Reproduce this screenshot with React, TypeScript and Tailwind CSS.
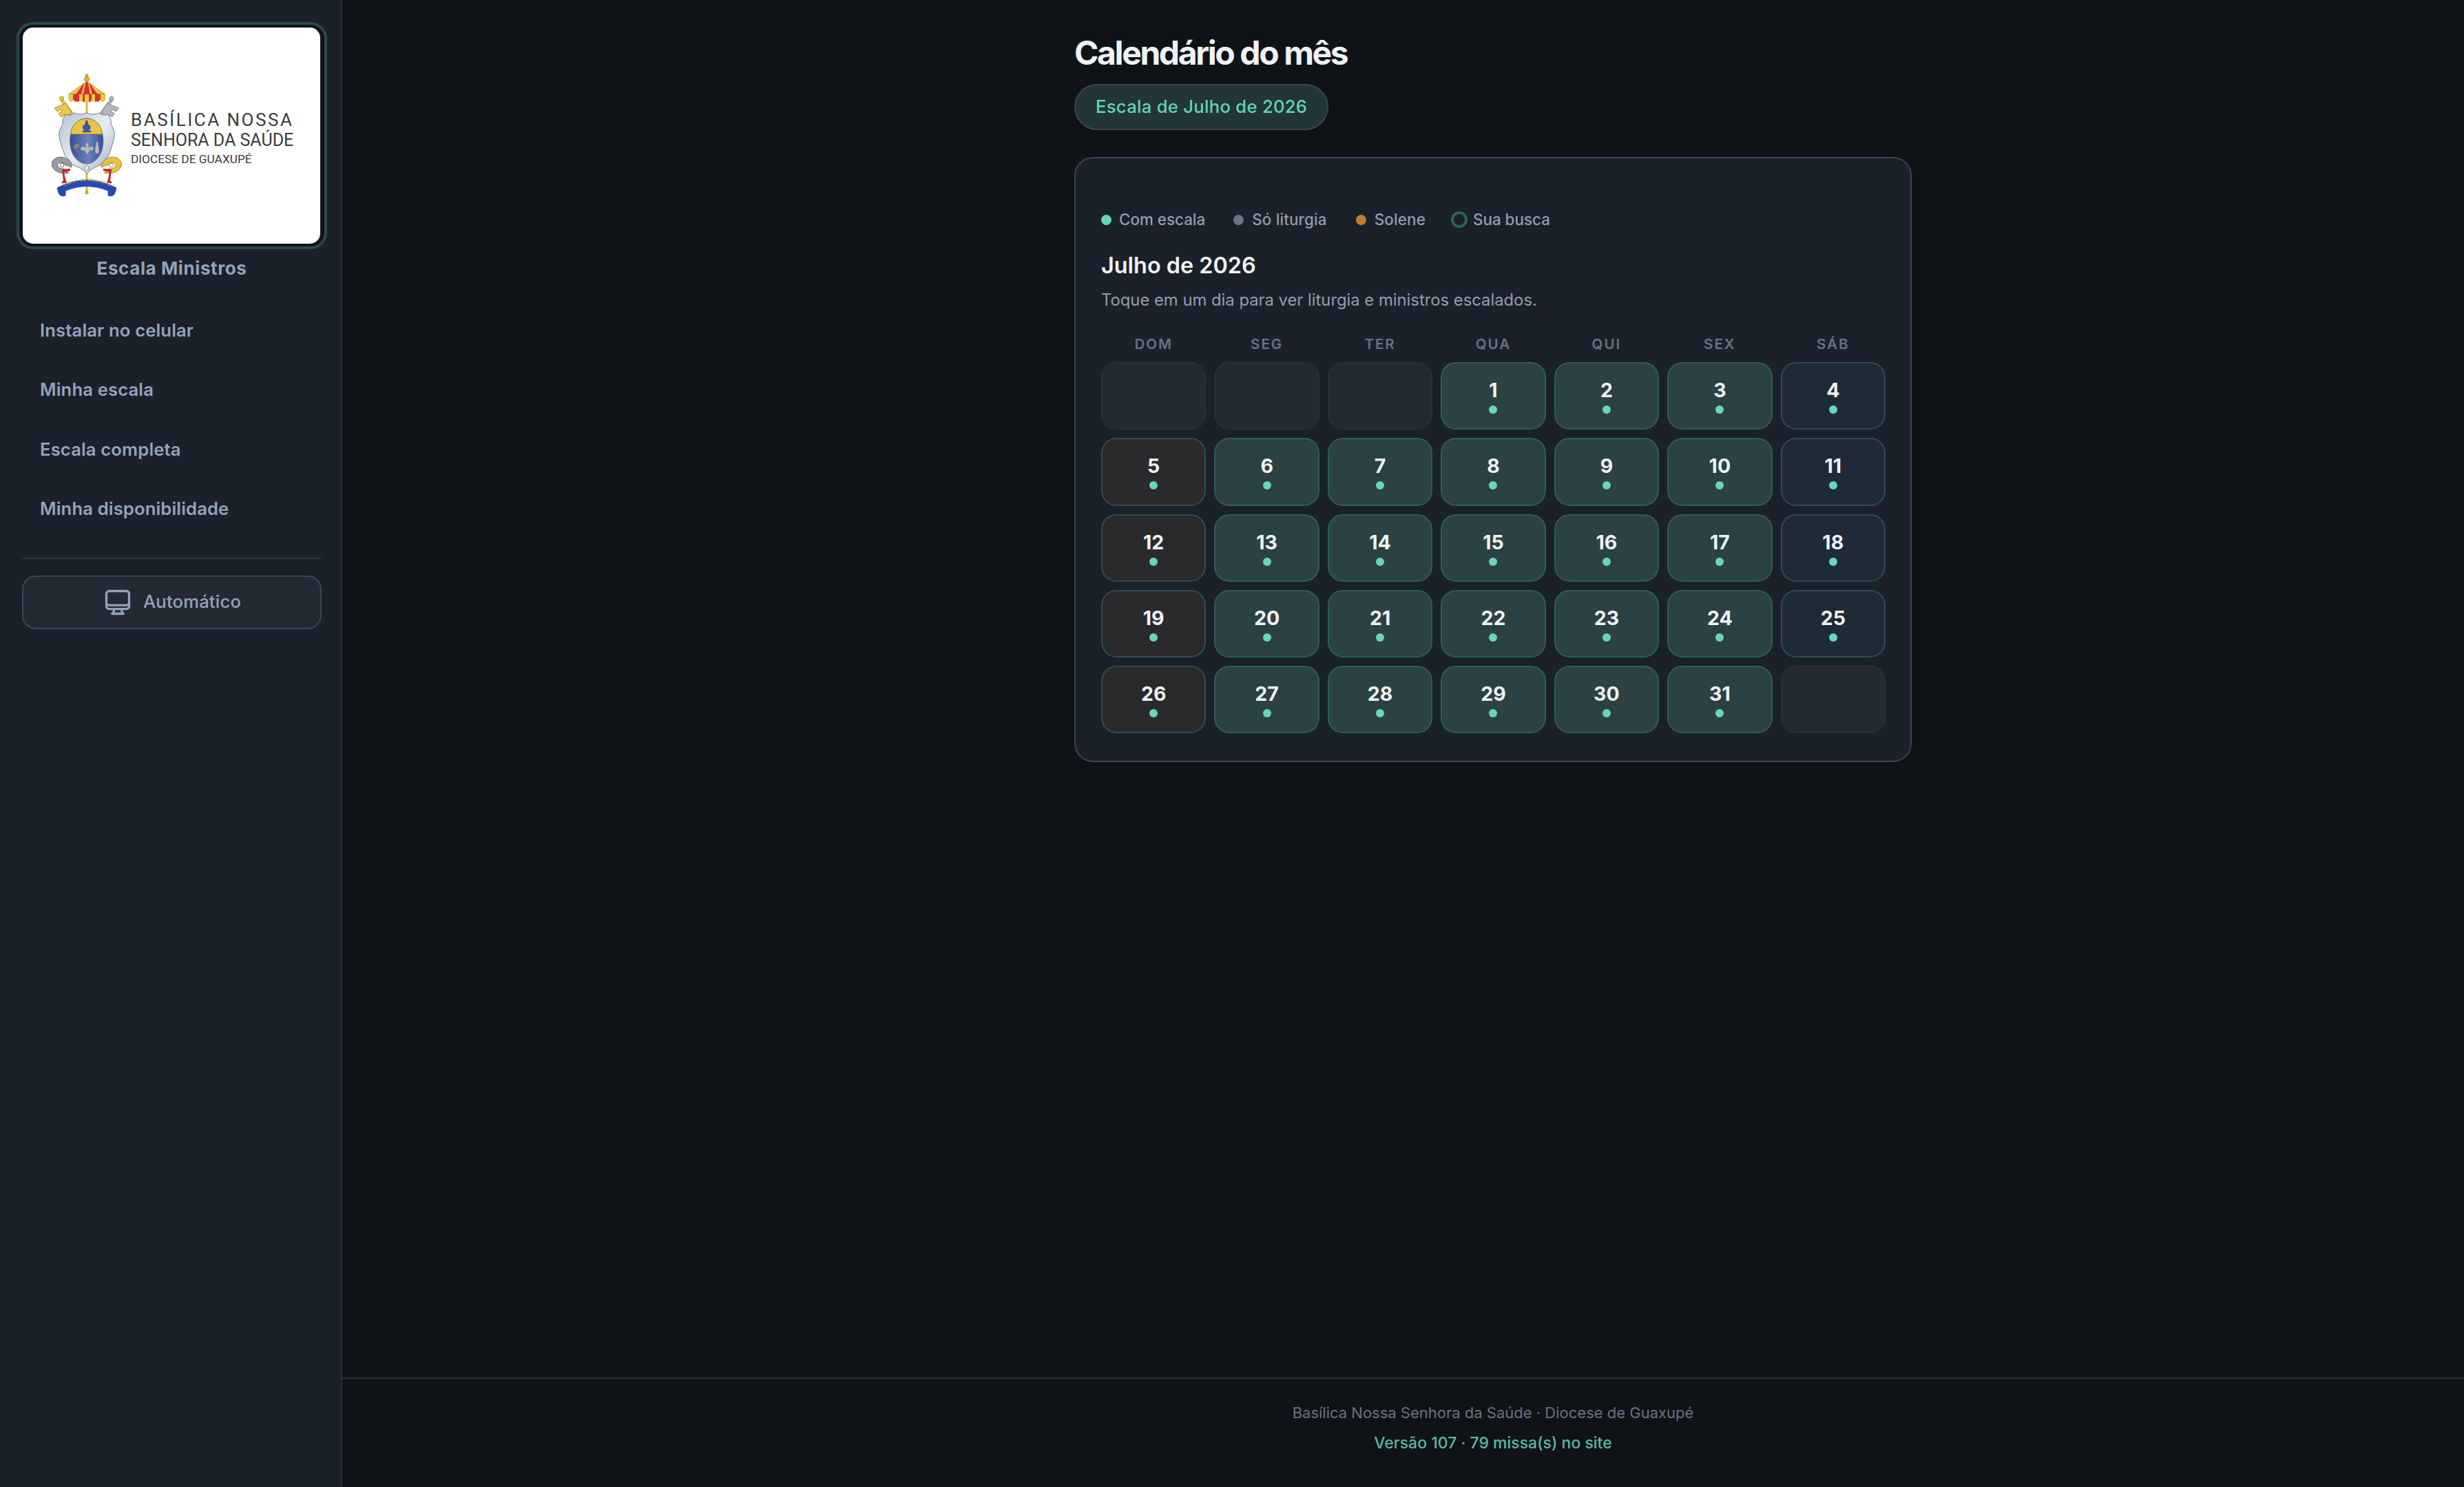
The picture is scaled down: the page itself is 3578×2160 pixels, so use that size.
const inter = { fontFamily: "Inter, 'Noto Sans', sans-serif" };

type Cell = { day?: number; kind: "empty" | "escala" | "domingo" | "sabado" };

const weekLabels = ["DOM", "SEG", "TER", "QUA", "QUI", "SEX", "SÁB"];

function buildCells(): Cell[] {
  const cells: Cell[] = [{ kind: "empty" }, { kind: "empty" }, { kind: "empty" }];
  for (let day = 1; day <= 31; day++) {
    const col = (day + 2) % 7;
    cells.push({ day, kind: col === 0 ? "domingo" : col === 6 ? "sabado" : "escala" });
  }
  cells.push({ kind: "empty" });
  return cells;
}

const cellStyles = {
  empty: "border-[#2a303b] bg-[#232a34]",
  escala: "border-[#2f5c5c] bg-[#2b4144]",
  domingo: "border-[#2f4f4d] bg-[#2a2a2c]",
  sabado: "border-[#2c4f50] bg-[#1e2a36]",
};

function KeyShape() {
  return (
    <>
      <path d="M49 78 L31 54 L28 56.5 L46 80 Z" />
      <circle cx="29.5" cy="53" r="3" />
      <path d="M36 60 L19 67 L23 72 L28 69 L30 72 L25 75 L29 80 L34 77 L36 81 L44 73 Z" />
    </>
  );
}

function Curl() {
  return (
    <>
      <path d="M40 161 C28 164 16 158 15 149 C15 141 25 136 33 139 C40 141 45 147 44 153 C40 151 38 150 35 150 C33 146 27 145 24 148 C22 152 27 156 33 155 Z" />
      <circle cx="30" cy="150" r="3" fill="#ffffff" />
    </>
  );
}

function Crest() {
  return (
    <svg viewBox="15 0 110 210" className="h-[210px] w-[110px] shrink-0">
      <defs>
        <linearGradient id="silver" x1="0" y1="0" x2="1" y2="1">
          <stop offset="0" stopColor="#b4c3d6" />
          <stop offset="0.5" stopColor="#e6ecf2" />
          <stop offset="1" stopColor="#a3b3c6" />
        </linearGradient>
        <linearGradient id="blue" x1="0" y1="0" x2="1" y2="0">
          <stop offset="0" stopColor="#34509e" />
          <stop offset="0.55" stopColor="#6d82bd" />
          <stop offset="1" stopColor="#34509e" />
        </linearGradient>
        <path id="ribbonPath" d="M33 181 Q66 165 100 181" />
      </defs>

      {/* pole */}
      <rect x="64.6" y="55" width="2.8" height="135" fill="#e0b22e" />
      <circle cx="66" cy="189.5" r="2.4" fill="#e0b22e" stroke="#8a6d1a" strokeWidth="0.5" />

      {/* keys */}
      <g stroke="#6d5a18" strokeWidth="0.6" fill="#eec93f">
        <KeyShape />
      </g>
      <g stroke="#55585c" strokeWidth="0.6" fill="#b4b7bb" transform="translate(131.5 0) scale(-1 1)">
        <KeyShape />
      </g>

      {/* canopy */}
      <circle cx="66" cy="20" r="2.2" fill="#e3b52f" stroke="#7a6114" strokeWidth="0.5" />
      <ellipse cx="66" cy="25" rx="4" ry="3" fill="#e3b52f" stroke="#7a6114" strokeWidth="0.5" />
      <path d="M66 28 L40 47 H92.5 Z" fill="#f0c93a" stroke="#7a6114" strokeWidth="0.6" />
      <path d="M62.5 30 L50 47 H58 Z M69.5 30 L74 47 H82 Z" fill="#d92f35" />
      <path d="M64.5 29 L61 47 H71 L67.5 29 Z" fill="#d92f35" />
      <path d="M40 47 H92.5 V55 L89 57.5 L86 55 L84 55 V57 L78 57.5 L75 55 H72 V57.5 L66 58 L60 57.5 V55 H57 L54 57.5 L48 57 V55 H46 L43 57.5 L40 55 Z" fill="#d92f35" stroke="#7a6114" strokeWidth="0.5" />
      <path d="M40 47 H46 V57 L43 57.5 L40 55 Z M55 47 H60 V57.5 L55 57 Z M63 47 H69 V58 L66 59 L63 58 Z M73 47 H78 V57.5 L73 57 Z M86 47 H92.5 V55 L89 57.5 L86 56 Z" fill="#f0c93a" />

      {/* curls */}
      <g fill="#9a9ea3" stroke="#3a3e42" strokeWidth="0.7">
        <Curl />
      </g>
      <g fill="#e7c43e" stroke="#7a6114" strokeWidth="0.7" transform="translate(131.5 0) scale(-1 1)">
        <Curl />
      </g>

      {/* shield */}
      <path
        d="M66 74 C72 77 80 76 84 74 C88 77 92 78 97 76 C99 81 102 84 101 90 C105 97 108 104 105 113 C103 122 100 130 97 137 C93 141 90 144 87 149 C81 152 75 154 71 157 C69 160 67 161 66 163 C65 161 63 160 61 157 C57 154 51 152 45 149 C42 144 39 141 35 137 C32 130 29 122 27 113 C24 104 27 97 31 90 C30 84 33 81 35 76 C40 78 44 77 48 74 C52 76 60 77 66 74 Z"
        fill="url(#silver)"
        stroke="#5f6e80"
        strokeWidth="0.9"
      />
      <circle cx="66" cy="154" r="3.3" fill="#e8edf2" stroke="#7b8796" strokeWidth="0.8" />

      {/* oval */}
      <ellipse cx="65.7" cy="115" rx="24.2" ry="33" fill="url(#blue)" stroke="#4a5a78" strokeWidth="0.7" />
      <path d="M42.6 105 C43.5 92 53 82 65.7 82 C78.5 82 88 92 88.8 105 Z" fill="#e7c446" stroke="#7a6114" strokeWidth="0.7" />
      <path d="M65.7 84 L67.5 87 V90 L71 93 V97 L68 100 H72 V102 H60 V100 H63 L60.5 97 V93 L64 90 V87 Z" fill="#3a58a8" stroke="#233a78" strokeWidth="0.4" />

      {/* charges */}
      <path d="M66.5 116 C69 120 70 122 68 124 C72 122 76 122 76 126 C76 129 73 130 71 128 C71 130 70 131 69 130 L68 134 H65 L64 130 C63 131 62 130 62 128 C60 130 57 129 57 126 C57 122 61 122 65 124 C63 122 64 120 66.5 116 Z" fill="#b4bac4" stroke="#555b63" strokeWidth="0.5" />
      <path d="M81 115 C83 117 83 119 82.5 120 C84 123 84 127 84 131 L83 133 H79 L78 131 C78 127 78 123 79.5 120 C79 119 79 117 81 115 Z" fill="#b8bdc6" stroke="#555b63" strokeWidth="0.5" />
      <path d="M47 122 C50 116 55 116 56 120 C57 124 53 127 51 126 L57 135 L55.5 136 L49 127 C46 126 46 124 47 122 Z" fill="#7e848c" stroke="#3e4248" strokeWidth="0.5" />

      {/* tassels */}
      <path d="M42 155 L30 156 L32 172 L29 176 H37 L35 170 L33 160 L42 158 Z" fill="#c7202c" />
      <path d="M90 155 L102 156 L100 172 L103 176 H95 L97 170 L99 160 L90 158 Z" fill="#c7202c" />

      {/* ribbon */}
      <path d="M23 183 Q66 160 109 183 L107 190 Q104 197 97 194 L97 187 Q66 174 35 187 L35 194 Q28 197 25 190 Z" fill="#2549b8" stroke="#132a78" strokeWidth="0.7" />
      <text fontSize="7" fill="#d8b63a" fontFamily="'Liberation Serif', serif" letterSpacing="0.1">
        <textPath href="#ribbonPath">SALVS INFIRMORVM</textPath>
      </text>
    </svg>
  );
}

function Logo() {
  return (
    <div className="-ml-[8px] h-[330px] w-[451px] rounded-[24px] border-[4px] border-[#2a4a4a] bg-[#10151a] py-[4px] pl-[5px] pr-[6px]">
      <div className="flex h-full items-center rounded-[15px] bg-white pb-[4px] pl-[42px]">
        <Crest />
        <div className="ml-[5px] flex flex-col whitespace-nowrap pt-[12px] text-[#3b3b3b]" style={{ fontFamily: "Roboto, sans-serif" }}>
          <span className="text-[26px] leading-[30px] tracking-[2.5px]">BASÍLICA NOSSA</span>
          <span className="text-[25px] leading-[30px]">SENHORA DA SAÚDE</span>
          <span className="text-[17.3px] leading-[24px]">DIOCESE DE GUAXUPÉ</span>
        </div>
      </div>
    </div>
  );
}

function Sidebar() {
  const links = ["Instalar no celular", "Minha escala", "Escala completa", "Minha disponibilidade"];
  return (
    <aside className="flex w-[497px] shrink-0 flex-col border-r-2 border-r-[#2a323e] bg-[#1a212a] pl-[32px] pr-[28px] pt-[32px]">
      <Logo />
      <p className="mt-[12px] text-center text-[26px] leading-[32px] font-bold tracking-[0.6px] text-[#94a3b8]">
        Escala Ministros
      </p>
      <nav className="mt-[31px] flex flex-col">
        {links.map((label) => (
          <a key={label} className="flex h-[86.4px] items-center pl-[26px] text-[25.6px] font-semibold tracking-[0.15px] text-[#94a3b8]">
            {label}
          </a>
        ))}
      </nav>
      <div className="mt-[27px] border-t-2 border-t-[#2a323e]" />
      <button
        type="button"
        className="mt-[24px] flex h-[78px] items-center justify-center gap-[15px] rounded-[20px] border-2 border-[#3a4556] bg-[#232a34] text-[25.6px] font-medium tracking-[0.2px] text-[#94a3b8]"
      >
        <svg viewBox="0 0 24 24" fill="none" stroke="currentColor" strokeWidth={1.8} strokeLinecap="round" strokeLinejoin="round" className="h-[44px] w-[44px]">
          <path d="M9 17.25v1.007a3 3 0 0 1-.879 2.122L7.5 21h9l-.621-.621A3 3 0 0 1 15 18.257V17.25m6-12V15a2.25 2.25 0 0 1-2.25 2.25H5.25A2.25 2.25 0 0 1 3 15V5.25m18 0A2.25 2.25 0 0 0 18.75 3H5.25A2.25 2.25 0 0 0 3 5.25m18 0V12a2.25 2.25 0 0 1-2.25 2.25H5.25A2.25 2.25 0 0 1 3 12V5.25" />
        </svg>
        Automático
      </button>
    </aside>
  );
}

function Legend() {
  return (
    <div className="flex h-[32px] items-center text-[22.4px] font-medium text-[#939eae]">
      <span className="h-[15px] w-[15px] rounded-full bg-[#66d6bf]" />
      <span className="ml-[11px]">Com escala</span>
      <span className="ml-[41px] h-[15px] w-[15px] rounded-full bg-[#6b7686]" />
      <span className="ml-[12px] tracking-[0.15px]">Só liturgia</span>
      <span className="ml-[42px] h-[15px] w-[15px] rounded-full bg-[#c97a2e]" />
      <span className="ml-[12px] tracking-[0.15px]">Solene</span>
      <span className="ml-[37px] h-[24px] w-[24px] rounded-full border-[4px] border-[#2e5f5e]" />
      <span className="ml-[8px]">Sua busca</span>
    </div>
  );
}

function CalendarCard() {
  const cells = buildCells();
  return (
    <section className="mt-[39px] h-[879px] rounded-[27px] border-2 border-[#3a4556] bg-[#1a212a] pl-[37px] pr-[36px] pt-[73px]">
      <Legend />
      <h2 className="mt-[29px] text-[32.4px] leading-[44px] font-semibold text-[#eef2f6]">Julho de 2026</h2>
      <p className="mt-[10px] text-[23.8px] leading-[36px] text-[#939eae]">
        Toque em um dia para ver liturgia e ministros escalados.
      </p>
      <div className="mt-[30px] grid grid-cols-7 gap-x-[12px]">
        {weekLabels.map((w) => (
          <div key={w} className="text-center text-[20.5px] leading-[32px] font-semibold tracking-[2px] text-[#687282]">
            {w}
          </div>
        ))}
      </div>
      <div className="mt-[10px] grid auto-rows-[98.3px] grid-cols-7 gap-[12px]">
        {cells.map((cell, i) => (
          <div key={i} className={`flex flex-col items-center rounded-[22px] border-2 ${cellStyles[cell.kind]}`}>
            {cell.day ? (
              <>
                <span className="mt-[21px] text-[28.5px] leading-[36px] font-bold text-[#eef2f6]">{cell.day}</span>
                <span className="mt-[4px] h-[12px] w-[12px] rounded-full bg-[#66d6bf]" />
              </>
            ) : null}
          </div>
        ))}
      </div>
    </section>
  );
}

export default function App() {
  return (
    <div className="flex h-[2160px] w-[3578px] overflow-hidden bg-[#0f1318]" style={inter}>
      <Sidebar />
      <main className="flex min-w-0 flex-1 flex-col">
        <div className="flex flex-1 justify-center pl-[261px]">
          <div className="w-[1216px] pt-[46px]">
            <h1 className="text-[48px] leading-[62px] font-bold tracking-[-2.4px] text-[#eef2f6]">Calendário do mês</h1>
            <div className="mt-[14px] inline-flex h-[67px] items-center rounded-full border-2 border-[#394656] bg-[#233537] px-[29px] text-[25.6px] font-medium tracking-[0.3px] text-[#5fd4bb]">
              Escala de Julho de 2026
            </div>
            <CalendarCard />
          </div>
        </div>
        <footer className="flex h-[159px] flex-col items-center border-t-2 border-t-[#2a323e] pl-[261px] pt-[31px]">
          <p className="text-[22px] leading-[36px] text-[#687282]">Basílica Nossa Senhora da Saúde · Diocese de Guaxupé</p>
          <p className="mt-[8px] text-[23px] leading-[36px] font-medium text-[#5ab8a4]">Versão 107 · 79 missa(s) no site</p>
        </footer>
      </main>
    </div>
  );
}
